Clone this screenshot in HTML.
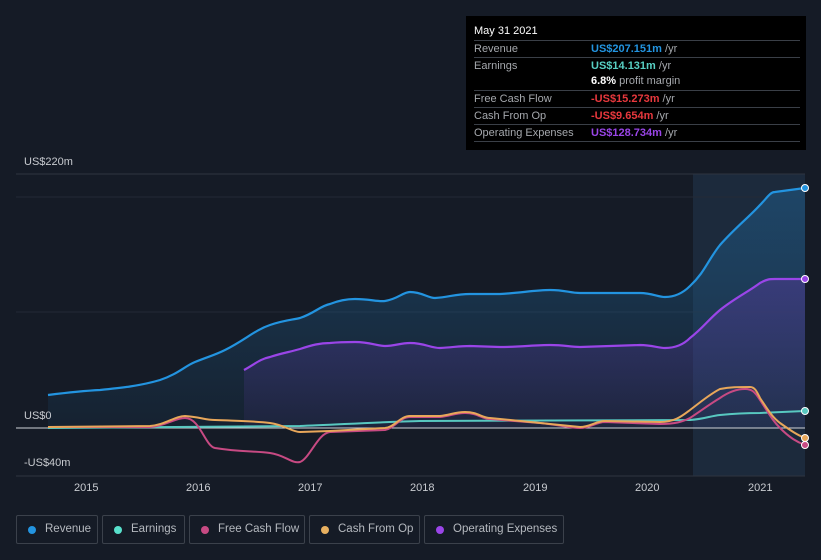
<!DOCTYPE html>
<html><head><meta charset="utf-8"><style>
body{margin:0;width:821px;height:560px;background:#151b26;font-family:"Liberation Sans",sans-serif;overflow:hidden;position:relative}
.tip{position:absolute;left:466px;top:16px;width:340px;height:134px;background:#000;color:#fff;font-size:11px}
.tip .h{position:absolute;left:8px;top:9px;font-size:11px}
.row{position:absolute;left:8px;width:326px;border-top:1px solid #3a3f47;height:16px;line-height:16px;color:#a5a8ad}
.row span{position:absolute;left:117px}
.leg{position:absolute;top:515px;height:29px;border:1px solid #3b414b;border-radius:2px;color:#b5b9bf;font-size:11.5px;line-height:27px;box-sizing:border-box;white-space:nowrap}
.leg i{position:absolute;left:11px;top:10px;width:8px;height:8px;border-radius:50%}
.leg b{font-weight:normal;position:absolute;left:28px}
.ax{position:absolute;color:#c8cbd0;font-size:11px}
</style></head><body>
<svg width="821" height="560" style="position:absolute;left:0;top:0">
<defs>
<linearGradient id="g1" x1="0" y1="0" x2="0" y2="1"><stop offset="0" stop-color="#1f5c8a" stop-opacity=".55"/><stop offset="1" stop-color="#1f5c8a" stop-opacity=".1"/></linearGradient>
<linearGradient id="g2" x1="0" y1="0" x2="0" y2="1"><stop offset="0" stop-color="#5a3aa0" stop-opacity=".45"/><stop offset="1" stop-color="#5a3aa0" stop-opacity=".1"/></linearGradient>
</defs>
<rect x="693" y="174" width="112" height="302" fill="#1c2a3c"/>
<line x1="16" y1="174" x2="805" y2="174" stroke="#2e3440"/>
<line x1="16" y1="197" x2="805" y2="197" stroke="#232a36"/>
<line x1="16" y1="312" x2="805" y2="312" stroke="#232a36"/>
<line x1="16" y1="476" x2="805" y2="476" stroke="#2e3440"/>
<path d="M48,395 C64,393 80,391 100,390 C120,388 140,386 160,380 C178,374 185,366 195,362 C210,356 215,355 225,350 C245,340 255,330 270,325 C285,320 292,320 300,318 C315,313 320,306 330,304 C340,300 348,299 355,299 C370,299 378,302 385,301 C398,299 403,292 410,292 C422,292 428,298 435,298 C450,297 455,294 470,294 C485,294 490,294 500,294 C520,293 535,290 550,290 C565,290 570,293 580,293 L640,293 C652,293 658,297 665,297 C675,297 683,293 690,286 C705,272 708,260 720,245 C735,228 748,218 760,205 C767,198 770,192 775,192 L805,188 L805,428 L48,428Z" fill="url(#g1)"/>
<path d="M244,370 C255,364 260,359 270,357 C282,353 290,352 300,349 C312,345 320,343 330,343 C340,342 348,342 355,342 C370,342 377,346 385,346 C395,346 400,343 410,343 C425,343 430,348 440,348 C455,347 460,346 470,346 L500,347 C520,347 535,345 550,345 C565,345 570,347 580,347 L640,345 C652,345 658,348 665,348 C675,348 683,345 690,338 C703,328 708,320 720,310 C735,298 748,292 760,283 C767,279 770,279 775,279 L805,279 L805,428 L244,428Z" fill="url(#g2)"/>
<path d="M48,395 C64,393 80,391 100,390 C120,388 140,386 160,380 C178,374 185,366 195,362 C210,356 215,355 225,350 C245,340 255,330 270,325 C285,320 292,320 300,318 C315,313 320,306 330,304 C340,300 348,299 355,299 C370,299 378,302 385,301 C398,299 403,292 410,292 C422,292 428,298 435,298 C450,297 455,294 470,294 C485,294 490,294 500,294 C520,293 535,290 550,290 C565,290 570,293 580,293 L640,293 C652,293 658,297 665,297 C675,297 683,293 690,286 C705,272 708,260 720,245 C735,228 748,218 760,205 C767,198 770,192 775,192 L805,188" fill="none" stroke="#2394e0" stroke-width="2.2"/>
<path d="M244,370 C255,364 260,359 270,357 C282,353 290,352 300,349 C312,345 320,343 330,343 C340,342 348,342 355,342 C370,342 377,346 385,346 C395,346 400,343 410,343 C425,343 430,348 440,348 C455,347 460,346 470,346 L500,347 C520,347 535,345 550,345 C565,345 570,347 580,347 L640,345 C652,345 658,348 665,348 C675,348 683,345 690,338 C703,328 708,320 720,310 C735,298 748,292 760,283 C767,279 770,279 775,279 L805,279" fill="none" stroke="#9a45e8" stroke-width="2.2"/>
<line x1="16" y1="428" x2="805" y2="428" stroke="#d0d3d8" stroke-width="1"/>
<path d="M48,428 L300,426 C330,425 380,422 420,421 L690,420 C705,419 710,416 720,415 C740,413 750,413 760,413 L805,411" fill="none" stroke="#58c8c0" stroke-width="2"/>
<path d="M48,427 L150,427 C165,426 175,418 185,418 C200,418 205,446 215,448 C240,452 255,451 270,453 C285,455 292,464 300,462 C310,458 318,433 330,432 L385,430 C395,428 400,417 410,417 L440,417 C450,416 455,413 465,413 C478,413 482,419 490,419 L540,423 C560,425 570,428 580,428 C590,428 596,422 605,422 L660,424 C675,424 682,422 690,418 C702,410 710,404 720,398 C730,391 738,389 745,389 C752,389 755,392 760,400 C768,412 772,420 780,428 C790,438 797,442 805,445" fill="none" stroke="#c74a83" stroke-width="2"/>
<path d="M48,427 L150,426 C165,425 175,416 185,416 C200,417 205,420 215,420 C240,421 255,421 270,423 C285,425 292,432 300,432 L330,431 L385,428 C395,427 400,416 410,416 L440,416 C450,415 455,412 465,412 C478,412 482,418 490,418 L580,427 C590,427 596,421 605,421 L660,422 C675,422 682,416 690,410 C702,401 710,394 720,389 C730,387 738,387 750,387 C755,387 757,392 760,398 C768,410 772,417 780,423 C790,430 797,435 805,438" fill="none" stroke="#e8a75a" stroke-width="2"/>
<circle cx="805" cy="188" r="3.5" fill="#2394e0" stroke="#fff" stroke-width="1"/>
<circle cx="805" cy="279" r="3.5" fill="#9a45e8" stroke="#fff" stroke-width="1"/>
<circle cx="805" cy="411" r="3.5" fill="#58c8c0" stroke="#fff" stroke-width="1"/>
<circle cx="805" cy="438" r="3.5" fill="#e8a75a" stroke="#fff" stroke-width="1"/>
<circle cx="805" cy="445" r="3.5" fill="#c74a83" stroke="#fff" stroke-width="1"/>
</svg>
<div class="ax" style="left:24px;top:156px">US$220m</div>
<div class="ax" style="left:24px;top:410px">US$0</div>
<div class="ax" style="left:24px;top:457px">-US$40m</div>
<div class="ax" style="left:74px;top:482px">2015</div>
<div class="ax" style="left:186px;top:482px">2016</div>
<div class="ax" style="left:298px;top:482px">2017</div>
<div class="ax" style="left:410px;top:482px">2018</div>
<div class="ax" style="left:523px;top:482px">2019</div>
<div class="ax" style="left:635px;top:482px">2020</div>
<div class="ax" style="left:748px;top:482px">2021</div>
<div class="tip">
<div class="h">May 31 2021</div>
<div class="row" style="top:24px">Revenue<span><b style="color:#2394e0">US$207.151m</b> /yr</span></div>
<div class="row" style="top:41px">Earnings<span><b style="color:#58d0c4">US$14.131m</b> /yr</span></div>
<div class="row" style="top:57px;border:0">&nbsp;<span><b style="color:#fff">6.8%</b> profit margin</span></div>
<div class="row" style="top:74px">Free Cash Flow<span><b style="color:#e8383d">-US$15.273m</b> /yr</span></div>
<div class="row" style="top:91px">Cash From Op<span><b style="color:#e8383d">-US$9.654m</b> /yr</span></div>
<div class="row" style="top:108px;border-bottom:1px solid #3a3f47">Operating Expenses<span><b style="color:#9a45e8">US$128.734m</b> /yr</span></div>
</div>
<div class="leg" style="left:16px;width:82px"><i style="background:#2394e0"></i><b>Revenue</b></div>
<div class="leg" style="left:102px;width:83px"><i style="background:#58e0cc"></i><b>Earnings</b></div>
<div class="leg" style="left:189px;width:116px"><i style="background:#c74a83"></i><b>Free Cash Flow</b></div>
<div class="leg" style="left:309px;width:111px"><i style="background:#e8b060"></i><b>Cash From Op</b></div>
<div class="leg" style="left:424px;width:140px"><i style="background:#9a45e8"></i><b>Operating Expenses</b></div>
</body></html>
